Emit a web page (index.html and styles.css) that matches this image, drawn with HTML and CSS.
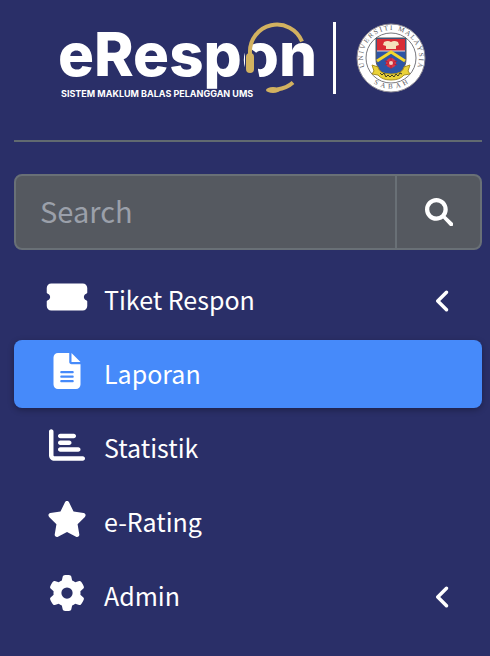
FILE: index.html
```html
<!DOCTYPE html>
<html lang="ms">
<head>
<meta charset="utf-8">
<meta name="viewport" content="width=device-width, initial-scale=1">
<title>eRespon</title>
<link rel="stylesheet" href="styles.css">
</head>
<body>
<aside class="sidebar">
  <a class="brand" href="#">
    <svg class="wordmark" viewBox="56 20 264 80">
      <text class="wordmark-name" x="57" y="76">eRespon</text>
      <path class="cutout" d="M244 40H250V49L257 54V70L259 80H244Z"/>
      <path class="band" d="M249 58V53A27 27 0 0 1 301 41.500"/>
      <rect class="pad" x="245" y="53" width="8" height="20" rx="4"/>
      <path class="boom" d="M292 82.500Q286 88 276 89.500"/>
      <ellipse class="pad" cx="272" cy="90" rx="7" ry="3"/>
      <text class="wordmark-tag" x="60" y="97">SISTEM MAKLUM BALAS PELANGGAN UMS</text>
    </svg>
    <span class="brand-divider"></span>
    <svg class="crest" viewBox="0 0 70 70">
      <defs>
        <path id="ring-top" d="M14 53.500A28 28 0 1 1 56 53.500"/>
        <path id="ring-bottom" d="M10 53A31 31 0 0 0 60 53"/>
      </defs>
      <circle cx="35" cy="35" r="34" fill="#fff" stroke="#8d8a94"/>
      <circle cx="35" cy="35" r="25" fill="#fff" stroke="#77777d"/>
      <text class="crest-text"><textPath href="#ring-top" startOffset="50%" text-anchor="middle">U N I V E R S I T I &#160; M A L A Y S I A</textPath></text>
      <text class="crest-text"><textPath href="#ring-bottom" startOffset="50%" text-anchor="middle">S &#160;A &#160;B &#160;A &#160;H</textPath></text>
      <path d="M20 15H50V36C50 46 43 51 35 54C27 51 20 46 20 36Z" fill="#2d55a5" stroke="#555"/>
      <path d="M21 16H49V28H21Z" fill="#d92c35"/>
      <path d="M21 28H49" stroke="#ddd"/>
      <path d="M28 19Q32 17 35 19Q38 17 42 19L43 22L40 23V26H30V23L27 22Z" fill="#f5e2bd"/>
      <path d="M21 38L35 29L49 38" fill="none" stroke="#f5d82b" stroke-width="3"/>
      <circle cx="35" cy="40" r="5" fill="#dc3543"/>
      <path d="M35 34V46M29 38L41 42M41 38L29 42" stroke="#b4203b"/>
      <circle cx="35" cy="40" r="2" fill="#f4cdbf"/>
      <path d="M16 42L22 44Q23 51 35 51Q47 51 48 44L54 42L52 48L54 51L48 52Q44 57 35 57Q26 57 22 52L16 51L18 48Z" fill="#ead238" stroke="#a89022"/>
      <path d="M24 50L26 52L28 50L30 54L32 52L34 54L36 52L38 54L40 51L42 53L44 50L46 51" fill="none" stroke="#403b24"/>
    </svg>
  </a>

  <form class="search" role="search">
    <input class="search-input" type="search" placeholder="Search" aria-label="Search">
    <button class="search-button" type="button" aria-label="Search">
      <svg class="search-icon" viewBox="0 0 512 512"><path d="M416 208c0 45.900-14.900 88.300-40 122.700L506 454c14 14 14 38 0 52s-38 14-52 0L330.700 376c-34.400 25.200-76.800 40-122.700 40C93.100 416 0 322.900 0 208S93.100 0 208 0S416 93.100 416 208zM208 338a130 130 0 1 0 0-260 130 130 0 1 0 0 260z"/></svg>
    </button>
  </form>

  <nav>
    <ul class="menu">
      <li><a class="menu-link" href="#">
        <svg class="menu-icon" viewBox="0 0 576 512"><path d="M0 128C0 92.700 28.700 64 64 64H512c35.300 0 64 28.700 64 64v64c0 8.800-7.400 15.700-15.700 18.600C541.500 217.100 528 235 528 256s13.500 38.900 32.300 45.400c8.300 2.900 15.700 9.800 15.700 18.600v64c0 35.300-28.700 64-64 64H64c-35.300 0-64-28.700-64-64V320c0-8.800 7.400-15.700 15.700-18.600C34.500 294.900 48 277 48 256s-13.500-38.900-32.300-45.400C7.400 207.700 0 200.800 0 192V128z"/></svg>
        <span class="menu-label">Tiket Respon</span>
        <svg class="chevron" viewBox="0 0 320 512"><path d="M41.400 233.400c-12.500 12.500-12.500 32.800 0 45.300l160 160c12.500 12.500 32.800 12.500 45.300 0s12.500-32.800 0-45.300L109.300 256 246.600 118.600c12.500-12.500 12.500-32.800 0-45.300s-32.800-12.500-45.300 0l-160 160z"/></svg>
      </a></li>
      <li><a class="menu-link active" href="#" aria-current="page">
        <svg class="menu-icon" viewBox="0 0 384 512"><path d="M64 0C28.700 0 0 28.700 0 64V448c0 35.300 28.700 64 64 64H320c35.300 0 64-28.700 64-64V160H256c-17.700 0-32-14.300-32-32V0H64zM256 0V128H384L256 0zM112 256H272c8.800 0 16 7.200 16 16s-7.200 16-16 16H112c-8.800 0-16-7.200-16-16s7.200-16 16-16zm0 64H272c8.800 0 16 7.200 16 16s-7.200 16-16 16H112c-8.800 0-16-7.200-16-16s7.200-16 16-16zm0 64H272c8.800 0 16 7.200 16 16s-7.200 16-16 16H112c-8.800 0-16-7.200-16-16s7.200-16 16-16z"/></svg>
        <span class="menu-label">Laporan</span>
      </a></li>
      <li><a class="menu-link" href="#">
        <svg class="menu-icon" viewBox="0 0 512 512"><path d="M32 32c17.700 0 32 14.300 32 32V400c0 8.800 7.200 16 16 16H480c17.700 0 32 14.300 32 32s-14.300 32-32 32H80c-44.200 0-80-35.800-80-80V64C0 46.300 14.300 32 32 32zm96 96c0-17.700 14.300-32 32-32H352c17.700 0 32 14.300 32 32s-14.300 32-32 32H160c-17.700 0-32-14.300-32-32zm32 64H288c17.700 0 32 14.300 32 32s-14.300 32-32 32H160c-17.700 0-32-14.300-32-32s14.300-32 32-32zm0 96H416c17.700 0 32 14.300 32 32s-14.300 32-32 32H160c-17.700 0-32-14.300-32-32s14.300-32 32-32z"/></svg>
        <span class="menu-label">Statistik</span>
      </a></li>
      <li><a class="menu-link" href="#">
        <svg class="menu-icon" viewBox="0 0 576 512"><path d="M316.900 18C311.600 7 300.400 0 288.100 0s-23.400 7-28.800 18L195 150.300 51.400 171.500c-12 1.800-22 10.200-25.700 21.700s-.7 24.200 7.900 32.700L137.800 329 113.200 474.700c-2 12 3 24.200 12.900 31.300s23 8 33.800 2.300l128.300-68.500 128.300 68.500c10.800 5.700 23.900 4.900 33.800-2.300s14.900-19.300 12.900-31.300L438.500 329 542.700 225.900c8.600-8.500 11.700-21.200 7.900-32.700s-13.700-19.900-25.700-21.700L381.200 150.300 316.900 18z"/></svg>
        <span class="menu-label">e-Rating</span>
      </a></li>
      <li><a class="menu-link" href="#">
        <svg class="menu-icon" viewBox="0 0 512 512"><path d="M495.900 166.600c3.200 8.700 .5 18.400-6.400 24.600l-43.300 39.400c1.100 8.300 1.700 16.800 1.700 25.400s-.6 17.100-1.700 25.400l43.300 39.400c6.900 6.200 9.600 15.900 6.400 24.600c-4.400 11.900-9.700 23.300-15.800 34.300l-4.700 8.100c-6.600 11-14 21.400-22.100 31.200c-5.900 7.200-15.700 9.600-24.500 6.800l-55.700-17.700c-13.400 10.300-28.200 18.900-44 25.400l-12.500 57.100c-2 9.100-9 16.300-18.200 17.800c-13.800 2.300-28 3.500-42.500 3.500s-28.700-1.200-42.500-3.500c-9.200-1.500-16.200-8.700-18.200-17.800l-12.500-57.100c-15.800-6.500-30.600-15.100-44-25.400L83.100 425.900c-8.800 2.800-18.600 .3-24.500-6.800c-8.100-9.800-15.500-20.200-22.100-31.200l-4.700-8.100c-6.100-11-11.400-22.400-15.800-34.300c-3.200-8.700-.5-18.400 6.400-24.600l43.300-39.400C64.600 273.100 64 264.600 64 256s.6-17.100 1.700-25.400L22.400 191.200c-6.900-6.200-9.600-15.900-6.400-24.600c4.400-11.900 9.700-23.300 15.800-34.300l4.700-8.100c6.600-11 14-21.400 22.100-31.200c5.900-7.200 15.700-9.600 24.500-6.800l55.700 17.700c13.400-10.300 28.200-18.900 44-25.400l12.500-57.100c2-9.100 9-16.300 18.200-17.800C227.300 1.200 241.500 0 256 0s28.700 1.200 42.500 3.500c9.200 1.500 16.200 8.700 18.200 17.800l12.500 57.100c15.800 6.500 30.600 15.100 44 25.400l55.700-17.700c8.800-2.800 18.600-.3 24.500 6.800c8.100 9.800 15.500 20.200 22.100 31.200l4.700 8.100c6.100 11 11.400 22.400 15.800 34.300zM256 336a80 80 0 1 0 0-160 80 80 0 1 0 0 160z"/></svg>
        <span class="menu-label">Admin</span>
        <svg class="chevron" viewBox="0 0 320 512"><path d="M41.400 233.400c-12.500 12.500-12.500 32.800 0 45.300l160 160c12.500 12.500 32.800 12.500 45.300 0s12.500-32.800 0-45.300L109.300 256 246.600 118.600c12.500-12.500 12.500-32.800 0-45.300s-32.800-12.500-45.300 0l-160 160z"/></svg>
      </a></li>
    </ul>
  </nav>
</aside>
</body>
</html>
```
FILE: styles.css
```css
* {
  box-sizing: border-box;
}

body {
  margin: 0;
  background: #2a2f68;
  color: #fff;
  font-family: "Noto Sans CJK SC", "Noto Sans", sans-serif;
}

.sidebar {
  min-height: 100vh;
  padding: 0 8px 0 14px;
}

.brand {
  display: flex;
  justify-content: center;
  align-items: flex-start;
  height: 142px;
  padding: 20px 14px 0 0;
  border-bottom: 2px solid #616a70;
}

.wordmark {
  width: 264px;
  height: 80px;
  overflow: visible;
}

.wordmark-name {
  fill: #fff;
  font: 800 60px Inter, sans-serif;
}

.wordmark-tag {
  fill: #fff;
  font: 700 9px Inter, sans-serif;
}

.cutout {
  fill: #2a2f68;
}

.band,
.boom {
  fill: none;
  stroke: #d2b160;
  stroke-width: 4;
}

.pad {
  fill: #d2b160;
}

.brand-divider {
  width: 3px;
  height: 72px;
  margin: 2px 20px 0 12px;
  background: #fff;
}

.crest {
  width: 70px;
  height: 70px;
  margin-top: 3px;
}

.crest-text {
  fill: #55555c;
  font: 7px "Liberation Serif", serif;
}

.search {
  display: flex;
  height: 76px;
  margin: 32px 0 16px;
  border: 2px solid #697076;
  border-radius: 8px;
  background: #555960;
  overflow: hidden;
}

.search-input {
  flex: 1;
  min-width: 0;
  padding: 0 24px 4px;
  border: 0;
  background: transparent;
  color: #fff;
  font: inherit;
  font-size: 29px;
  appearance: none;
}

.search-input::placeholder {
  color: #9ba0aa;
  opacity: 1;
}

.search-button {
  display: flex;
  justify-content: center;
  align-items: center;
  width: 85px;
  padding: 0;
  border: 0;
  border-left: 2px solid #697076;
  background: transparent;
}

.search-icon {
  width: 28px;
  height: 28px;
  fill: #fff;
}

.menu {
  display: grid;
  gap: 6px;
  margin: 0;
  padding: 0;
  list-style: none;
}

.menu-link {
  display: flex;
  align-items: flex-start;
  height: 68px;
  padding: 13px 30px 0 32px;
  border-radius: 8px;
  color: #fff;
  text-decoration: none;
}

.menu-link.active {
  background: #468afa;
  box-shadow: 0 2px 6px rgba(0, 0, 0, 0.3);
}

.menu-icon {
  width: 42px;
  height: 36px;
  margin-right: 16px;
  fill: currentColor;
}

.menu-label {
  flex: 1;
  font-size: 25px;
  line-height: 40px;
}

.chevron {
  width: 18px;
  height: 28px;
  margin-top: 8px;
  fill: currentColor;
}
```
